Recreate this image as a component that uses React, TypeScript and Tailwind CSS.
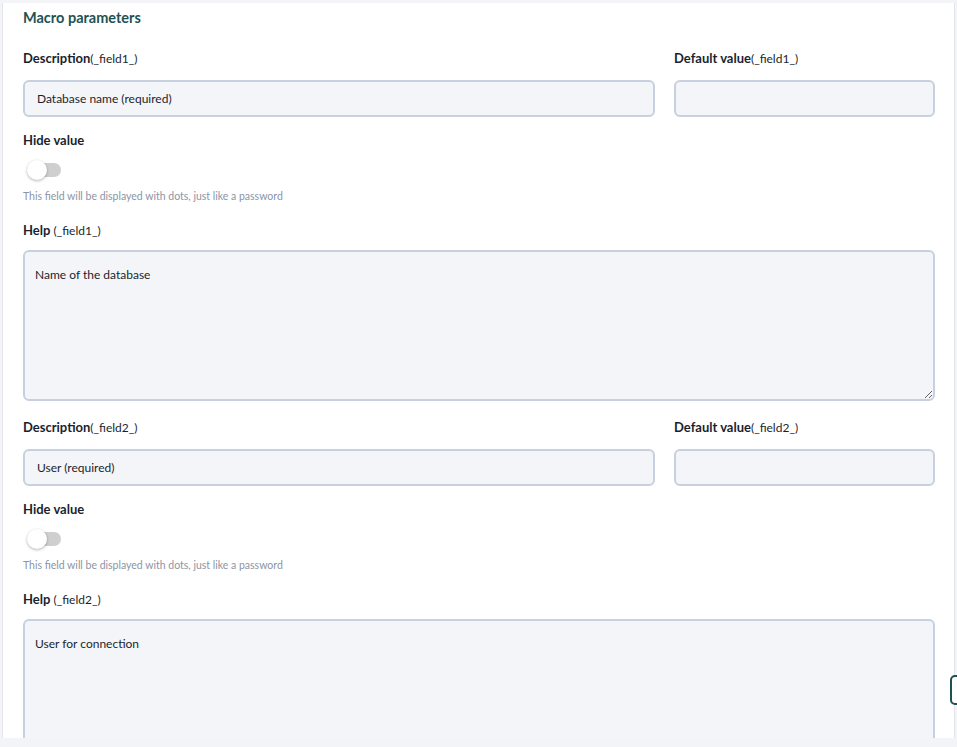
import React from "react";

interface FieldBlockProps {
  field: string;
  description: string;
  help: string;
}

const labelClass = "text-[13px] leading-5 font-bold text-[#1b1f2e]";
const inputClass =
  "h-[37px] w-full rounded-[6px] border-2 border-[#c6d0de] bg-[#f4f5f9] px-[12px] text-[12px] text-[#1b1f2e] outline-none";

function Toggle() {
  return (
    <div className="relative ml-[4px] mt-[10px] h-[20px] w-[36px]">
      <div className="absolute left-[6px] top-[3px] h-[14px] w-[28px] rounded-full bg-[#cfcfcf]" />
      <div className="absolute left-0 top-0 h-[20px] w-[20px] rounded-full bg-white shadow-[0_1px_3px_rgba(0,0,0,0.3)]" />
    </div>
  );
}

function FieldBlock({ field, description, help }: FieldBlockProps) {
  return (
    <div>
      <div className="grid grid-cols-[632px_261px] gap-x-[19px]">
        <div>
          <label className={labelClass}>
            Description<span className="text-[12px] font-normal">(_{field}_)</span>
          </label>
          <input readOnly defaultValue={description} className={`mt-[11px] ${inputClass}`} />
        </div>
        <div>
          <label className={labelClass}>
            Default value<span className="text-[12px] font-normal">(_{field}_)</span>
          </label>
          <input readOnly defaultValue="" className={`mt-[11px] ${inputClass}`} />
        </div>
      </div>

      <div className={`mt-[13px] ${labelClass}`}>Hide value</div>
      <Toggle />
      <p className="mt-[8px] text-[10.5px] leading-4 text-[#8c95a5]">
        This field will be displayed with dots, just like a password
      </p>

      <div className={`mt-[16px] ${labelClass}`}>
        Help <span className="text-[12px] font-normal">(_{field}_)</span>
      </div>
      <textarea
        readOnly
        defaultValue={help}
        className="mt-[9px] block h-[151px] w-[912px] rounded-[6px] border-2 border-[#c6d0de] bg-[#f4f5f9] px-[10px] pt-[15px] pb-[12px] text-[12px] leading-4 text-[#1b1f2e] outline-none"
      />
    </div>
  );
}

export default function App() {
  return (
    <div className="relative h-[747px] w-full overflow-hidden bg-[#f3f4f7] pl-[2px] pt-[3px] font-['Lato',sans-serif]">
      <div className="h-[735px] w-[953px] overflow-hidden border-x border-[#e3e5ea] bg-white pl-[20px]">
        <h2 className="pt-[4px] text-[14.5px] leading-[22px] font-bold text-[#1e5252]">
          Macro parameters
        </h2>

        <div className="mt-[16px] space-y-[13px]">
          <FieldBlock field="field1" description="Database name (required)" help="Name of the database" />
          <FieldBlock field="field2" description="User (required)" help="User for connection" />
        </div>
      </div>

      <div className="absolute left-[950px] top-[675px] h-[30px] w-[22px] rounded-[5px] border-2 border-[#1e5252] bg-white" />
    </div>
  );
}
